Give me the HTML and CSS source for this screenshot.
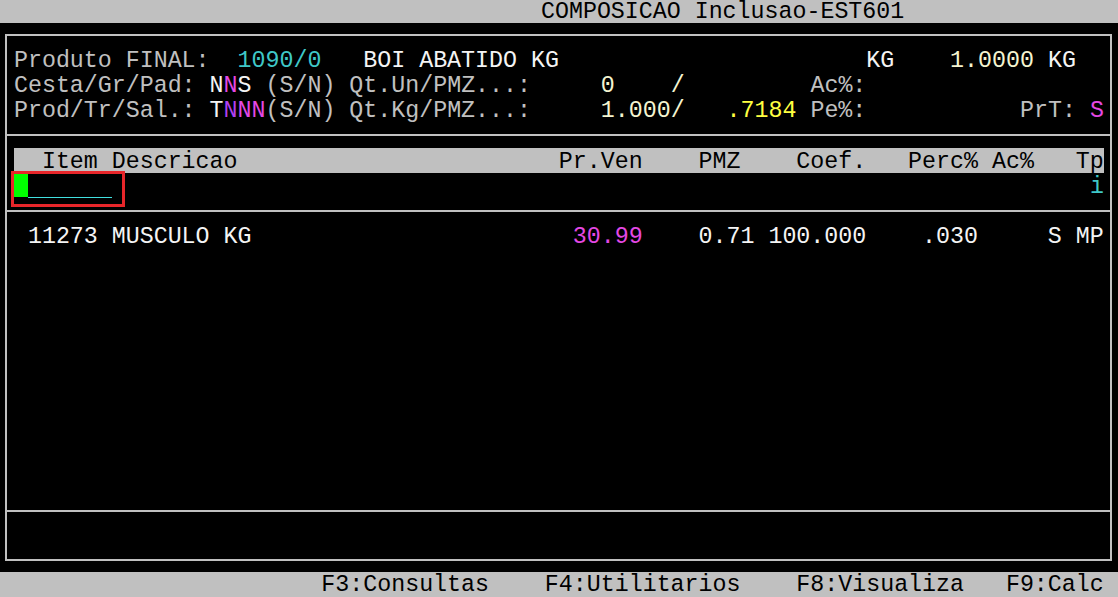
FILE: index.html
```html
<!DOCTYPE html>
<html lang="pt">
<head>
  <meta charset="UTF-8">
  <title>COMPOSICAO Inclusao-EST601</title>
  <link rel="stylesheet" href="styles.css">
</head>
<body>
  <div class="titlebar">COMPOSICAO Inclusao-EST601</div>

  <div class="frame">
    <!-- Cabecalho do produto -->
    <div class="section info">
      <div class="line"><span class="lbl">Produto FINAL:</span>  <span class="cyan">1090/0</span>   <span class="white">BOI ABATIDO KG</span>                      <span class="white">KG</span>    <span class="pale">1.0000</span> <span class="white">KG</span></div>
      <div class="line"><span class="lbl">Cesta/Gr/Pad: </span><span class="white">N</span><span class="mag">N</span><span class="white">S</span> <span class="lbl">(S/N)</span> <span class="lbl">Qt.Un/PMZ...:</span>     <span class="pale">0</span>    <span class="pale">/</span>         <span class="lbl">Ac%:</span></div>
      <div class="line"><span class="lbl">Prod/Tr/Sal.: </span><span class="white">T</span><span class="violet">N</span><span class="mag">NN</span><span class="lbl">(S/N)</span> <span class="lbl">Qt.Kg/PMZ...:</span>     <span class="pale">1.000/</span>   <span class="yellow">.7184</span> <span class="lbl">Pe%:</span>           <span class="lbl">PrT:</span> <span class="mag">S</span></div>
    </div>

    <!-- Itens da composicao -->
    <div class="section entry">
      <div class="col-head line">  Item Descricao                       Pr.Ven    PMZ    Coef.   Perc% Ac%   Tp</div>
      <div class="input-row">
        <span class="cursor"></span>
        <span class="field"></span>
        <span class="spacer"></span>
        <span class="type cyan">i</span>
        <div class="mark"></div>
      </div>
    </div>

    <div class="section list">
      <div class="line white"> 11273 MUSCULO KG                       <span class="mag">30.99</span>    0.71 100.000    .030     S MP</div>
    </div>

    <div class="section status"></div>
  </div>

  <div class="keys">                       F3:Consultas    F4:Utilitarios    F8:Visualiza   F9:Calc</div>
</body>
</html>
```

FILE: styles.css
```css
body {
  margin: 0;
  padding: 0;
  background-color: #000;
  color: #c0c0c0;
  font-family: "Liberation Mono", "DejaVu Sans Mono", monospace;
  font-size: 23.29px;
  overflow: hidden;
}

.titlebar {
  height: 23px;
  box-sizing: border-box;
  padding: 1px 0 0 541px;
  line-height: 23px;
  background-color: #c0c0c0;
  color: #000;
  white-space: pre;
}

.frame {
  margin: 11px 0 0 5px;
  width: 1107px;
  box-sizing: border-box;
  border: 2px solid #c0c0c0;
}

.section {
  padding-left: calc(1ch - 7px);
  padding-right: 6px;
}

.line {
  height: 25px;
  box-sizing: border-box;
  padding-top: 2px;
  line-height: 25px;
  white-space: pre;
}

.info {
  padding-top: 11px;
  padding-bottom: 12px;
  border-bottom: 2px solid #c0c0c0;
}

.entry {
  padding-top: 12px;
  padding-bottom: 12px;
  border-bottom: 2px solid #c0c0c0;
}

.col-head {
  background-color: #c0c0c0;
  color: #000;
}

.input-row {
  position: relative;
  display: flex;
  align-items: flex-start;
  height: 25px;
  line-height: 25px;
}

.cursor {
  flex-shrink: 0;
  width: 1ch;
  height: 23px;
  margin-top: 1px;
  background-color: #00ff00;
}

.field {
  flex-shrink: 0;
  width: 6ch;
  height: 24px;
  border-bottom: 1px solid #40e0e0;
}

.spacer {
  flex: 1;
}

.type {
  margin-top: 2px;
}

/* destaque vermelho sobre o campo */
.mark {
  position: absolute;
  left: -3px;
  top: -2px;
  width: 114px;
  height: 36px;
  box-sizing: border-box;
  border: 3px solid #e8262a;
}

.list {
  height: 287px;
  padding-top: 11px;
  border-bottom: 2px solid #c0c0c0;
}

.status {
  height: 47px;
}

.keys {
  margin-top: 11px;
  height: 25px;
  box-sizing: border-box;
  padding-top: 1px;
  line-height: 25px;
  background-color: #c0c0c0;
  color: #000;
  white-space: pre;
}

.lbl { color: #c0c0c0; }
.white { color: #f4f4f4; }
.cyan { color: #3fc8c8; }
.pale { color: #f4f4d0; }
.yellow { color: #ffff40; }
.mag { color: #e448e4; }
.violet { color: #b040f0; }
```
